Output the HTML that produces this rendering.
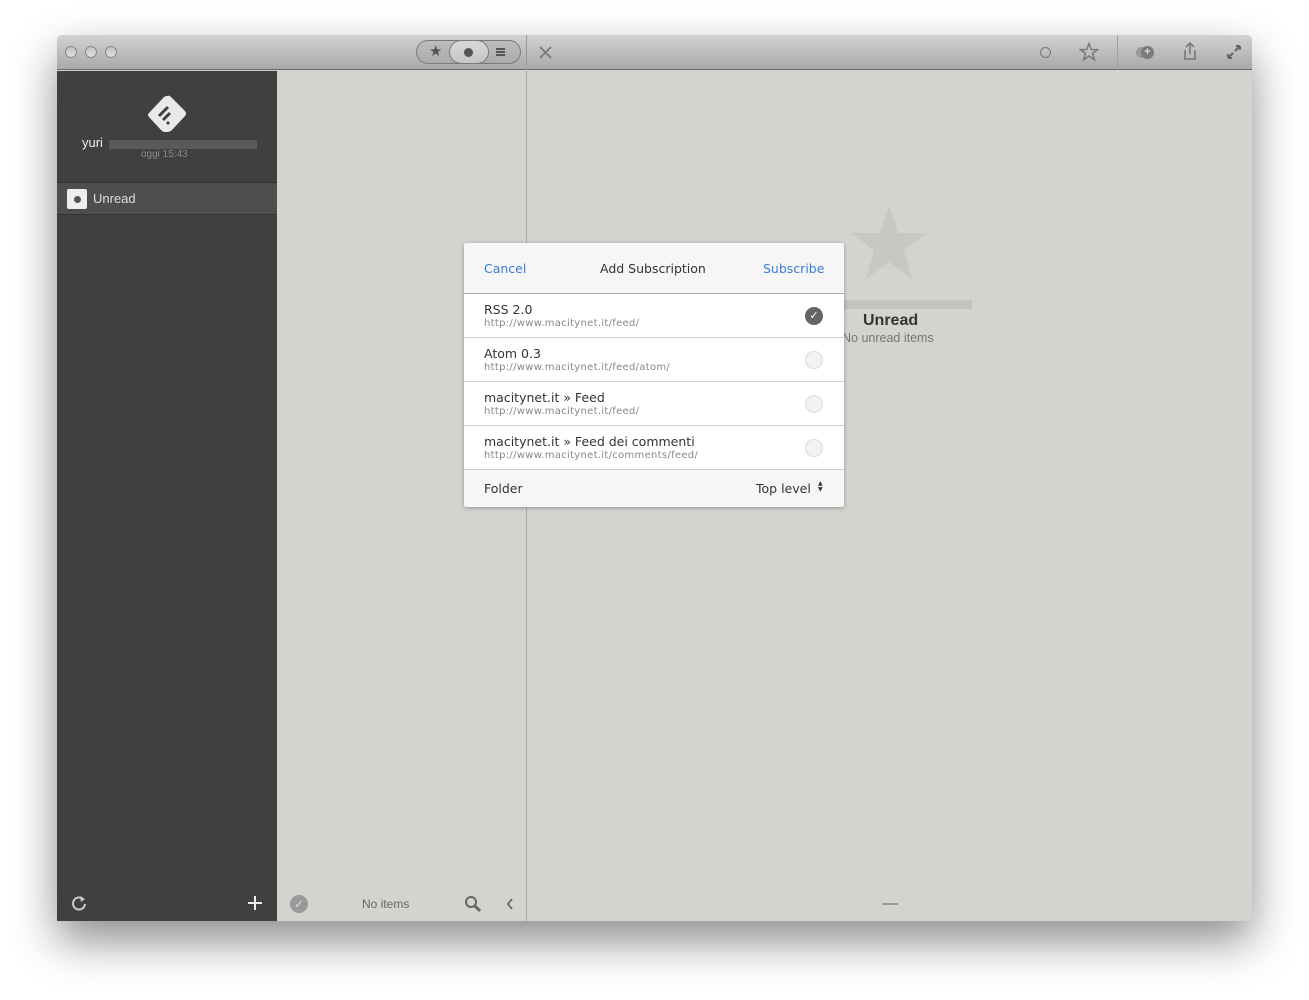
<!DOCTYPE html>
<html><head><style>
*{margin:0;padding:0;box-sizing:border-box}
body{width:1309px;height:1000px;background:#fff;font-family:"Liberation Sans","DejaVu Sans",sans-serif;position:relative;overflow:hidden}
.abs{position:absolute}
#win{left:57px;top:35px;width:1195px;height:886px;background:#d4d3cf;box-shadow:0 20px 45px rgba(0,0,0,.45);border-radius:5px 5px 0 0;overflow:hidden}
#tb{left:0;top:0;width:1195px;height:35px;background:linear-gradient(#d2d2d2,#a9a9a9);border-bottom:1px solid #6a6a6a}
.dot{width:12px;height:12px;border-radius:50%;border:1px solid #8a8a8a;background:linear-gradient(#c4c4c4,#e0e0e0);top:11px}
#side{left:0;top:36px;width:220px;height:850px;background:#404040}
.dlg{font-family:"DejaVu Sans","Liberation Sans",sans-serif}
.row{left:0;width:380px;height:44px;background:#fff;border-top:1px solid #d0d0d0}
.row .t{position:absolute;left:20px;top:8px;font-size:12.5px;color:#333}
.row .u{position:absolute;left:20px;top:24px;font-size:10px;color:#888;letter-spacing:.3px}
.row .r{position:absolute;left:341px;top:13px;width:18px;height:18px;border-radius:50%;border:1px solid #ddd;background:#f2f2f2}
</style></head><body>
<div id="win" class="abs">
 <div id="tb" class="abs">
  <div class="abs dot" style="left:8px"></div><div class="abs dot" style="left:28px"></div><div class="abs dot" style="left:48px"></div>
  <div class="abs" style="left:359px;top:5px;width:105px;height:24px;border:1px solid #7a7a7a;border-radius:12px;background:linear-gradient(#bdbdbd,#ababab)"></div>
  <div class="abs" style="left:392px;top:5px;width:40px;height:24px;border:1px solid #7a7a7a;border-radius:12px;background:linear-gradient(#d8d8d8,#c6c6c6)"></div>
  <div class="abs" style="left:372px;top:7px;font-size:15px;color:#555">★</div>
  <div class="abs" style="left:407px;top:13px;width:9px;height:9px;border-radius:50%;background:#555"></div>
  <div class="abs" style="left:439px;top:13px;width:9px;height:2px;background:#555;box-shadow:0 3px 0 #555,0 6px 0 #555"></div>
  <div class="abs" style="left:469px;top:0;width:1px;height:35px;background:#999"></div>
  <svg class="abs" style="left:482px;top:11px" width="13" height="13"><path d="M1 1L12 12M12 1L1 12" stroke="#777" stroke-width="1.6"/></svg>
  <div class="abs" style="left:983px;top:12px;width:11px;height:11px;border-radius:50%;border:1.5px solid #777"></div>
  <svg class="abs" style="left:1022px;top:7px" width="20" height="20"><path d="M10 1.5L12.3 7.6H18.6L13.5 11.4L15.4 17.8L10 14L4.6 17.8L6.5 11.4L1.4 7.6H7.7Z" stroke="#777" stroke-width="1.4" fill="none"/></svg>
  <div class="abs" style="left:1060px;top:0;width:1px;height:35px;background:#a0a0a0"></div>
  <div class="abs" style="left:1079px;top:12px;width:11px;height:11px;border-radius:50%;background:#999"></div>
  <div class="abs" style="left:1084px;top:11px;width:13px;height:13px;border-radius:50%;background:#7a7a7a;color:#ddd;font-size:11px;line-height:12px;text-align:center;font-weight:bold">+</div>
  <svg class="abs" style="left:1125px;top:6px" width="16" height="20"><path d="M8 2V13M4 6L8 2L12 6M3 9V18H13V9" stroke="#777" stroke-width="1.6" fill="none"/></svg>
  <svg class="abs" style="left:1169px;top:9px" width="16" height="16"><path d="M2 14L7 9M2 14V10M2 14H6M14 2L9 7M14 2V6M14 2H10" stroke="#666" stroke-width="2" fill="none"/></svg>
 </div>
 <div id="side" class="abs">
  <svg class="abs" style="left:86px;top:23px" width="48" height="42"><path d="M24 2Q26 1 28 3L42 17Q44 20 42 22L29 36Q27 38 24 38H22Q20 38 18 36L6 23Q4 21 6 19L21 3Q22 2 24 2Z" fill="#e9e9e9"/><path d="M16 22l9-9M20 26l7-7M24 30l2-2" stroke="#404040" stroke-width="3"/></svg>
  <div class="abs" style="left:25px;top:64px;font-size:13px;color:#eee">yuri</div>
  <div class="abs" style="left:52px;top:69px;width:148px;height:9px;background:#5a5a5a"></div>
  <div class="abs" style="left:84px;top:78px;font-size:10px;color:#8a8a8a">oggi 15:43</div>
  <div class="abs" style="left:0;top:111px;width:220px;height:33px;background:#4e4e4e;border-top:1px solid #333;border-bottom:1px solid #333"></div>
  <div class="abs" style="left:10px;top:118px;width:20px;height:20px;background:#eee;border-radius:2px"></div>
  <div class="abs" style="left:17px;top:125px;width:7px;height:7px;border-radius:50%;background:#555"></div>
  <div class="abs" style="left:36px;top:120px;font-size:13px;color:#ddd">Unread</div>
  <svg class="abs" style="left:13px;top:823px" width="18" height="18"><path d="M13.5 5.5A6 6 0 1 0 15 10" stroke="#ccc" stroke-width="2" fill="none"/><path d="M10 2L15 5L11 8Z" fill="#ccc"/></svg>
  <svg class="abs" style="left:190px;top:824px" width="16" height="16"><path d="M8 1V15M1 8H15" stroke="#eee" stroke-width="2"/></svg>
 </div>
 <div class="abs" style="left:469px;top:36px;width:1px;height:850px;background:#aaa"></div>
 <div class="abs" style="left:233px;top:860px;width:18px;height:18px;border-radius:50%;background:#999;color:#ddd;font-size:12px;text-align:center;line-height:18px">✓</div>
 <div class="abs" style="left:305px;top:862px;font-size:12px;color:#666">No items</div>
 <svg class="abs" style="left:407px;top:860px" width="18" height="18"><circle cx="7" cy="7" r="5" stroke="#666" stroke-width="2" fill="none"/><path d="M11 11L16 16" stroke="#666" stroke-width="3"/></svg>
 <svg class="abs" style="left:448px;top:862px" width="10" height="14"><path d="M7 2L3 7L7 12" stroke="#666" stroke-width="1.8" fill="none"/></svg>
 <div class="abs" style="left:825px;top:868px;width:16px;height:2px;background:#999"></div>
 <svg class="abs" style="left:792px;top:168px" width="80" height="78"><path d="M40 2L49 30H78L55 47L63 76L40 59L17 76L25 47L2 30H31Z" fill="#c8c7c3"/></svg>
 <div class="abs" style="left:785px;top:265px;width:130px;height:9px;background:#c4c3bf"></div>
 <div class="abs" style="left:806px;top:277px;font-size:16px;font-weight:bold;color:#333">Unread</div>
 <div class="abs" style="left:785px;top:296px;font-size:12.5px;color:#777">No unread items</div>
</div>
<div class="abs dlg" style="left:464px;top:243px;width:380px;height:264px;background:#f6f6f6;box-shadow:0 1px 4px rgba(0,0,0,.3);border-radius:2px">
 <div class="abs" style="left:20px;top:18px;font-size:12.5px;color:#3a7bd5">Cancel</div>
 <div class="abs" style="left:136px;top:18px;font-size:12.5px;color:#333">Add Subscription</div>
 <div class="abs" style="left:299px;top:18px;font-size:12.5px;color:#3a7bd5">Subscribe</div>
 <div class="abs row" style="top:50px;border-top-color:#aaa"><div class="t">RSS 2.0</div><div class="u">http://www.macitynet.it/feed/</div><div class="r" style="background:#666;border-color:#666;color:#fff;font-size:11px;text-align:center;line-height:16px">✓</div></div>
 <div class="abs row" style="top:94px"><div class="t">Atom 0.3</div><div class="u">http://www.macitynet.it/feed/atom/</div><div class="r"></div></div>
 <div class="abs row" style="top:138px"><div class="t">macitynet.it » Feed</div><div class="u">http://www.macitynet.it/feed/</div><div class="r"></div></div>
 <div class="abs row" style="top:182px"><div class="t">macitynet.it » Feed dei commenti</div><div class="u">http://www.macitynet.it/comments/feed/</div><div class="r"></div></div>
 <div class="abs" style="left:0;top:226px;width:380px;height:1px;background:#ccc"></div>
 <div class="abs" style="left:20px;top:238px;font-size:12.5px;color:#333">Folder</div>
 <div class="abs" style="left:292px;top:238px;font-size:12.5px;color:#333">Top level</div>
 <div class="abs" style="left:354px;top:238px;font-size:6px;color:#333;line-height:6px">▲<br>▼</div>
</div>
</body></html>
